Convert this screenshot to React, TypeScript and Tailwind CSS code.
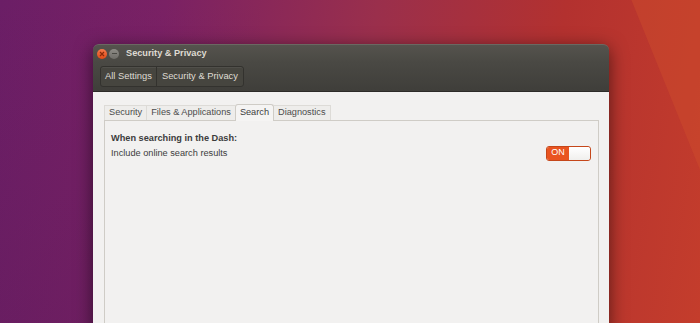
export default function App() {
  return (
    <div className="relative w-[700px] h-[323px] overflow-hidden bg-[linear-gradient(100deg,#6b1e66_0%,#7a2164_22%,#9a2f4c_50%,#b3312f_75%,#c43d2c_100%)] font-['Liberation_Sans',sans-serif]">
      {/* soft lighter facet top-right */}
      <div className="absolute right-[-70px] top-[-40px] w-[110px] h-[200px] rotate-[-22deg] bg-[#cf4e2c]/45" />
      <div className="absolute left-0 top-0 w-[260px] h-[323px] bg-[linear-gradient(180deg,#6e1e6c00_0%,#5a1a5a55_100%)]" />

      <div className="relative ml-[93px] mt-[44px] w-[516px] rounded-t-[6px] shadow-[0_4px_18px_rgba(0,0,0,0.55)]">
        {/* title bar */}
        <div className="flex items-center h-[18px] pl-[3px] rounded-t-[6px] bg-[linear-gradient(180deg,#55534d,#4a4944)] border-t border-[#6a6862]">
          <div className="flex items-center justify-center w-[10px] h-[10px] rounded-full bg-[linear-gradient(180deg,#f37a4d,#df4a16)] ml-[1px]">
            <svg width="6" height="6" viewBox="0 0 6 6">
              <path d="M1 1L5 5M5 1L1 5" stroke="#8a2a0a" strokeWidth="1.2" />
            </svg>
          </div>
          <div className="flex items-center justify-center w-[10px] h-[10px] rounded-full bg-[linear-gradient(180deg,#8d8b85,#6f6d68)] ml-[2px]">
            <div className="w-[5px] h-[1px] bg-[#4a4944]" />
          </div>
          <span className="ml-[7px] text-[9.2px] font-bold text-[#dfdbd2] leading-none">Security &amp; Privacy</span>
        </div>

        {/* toolbar */}
        <div className="flex items-center h-[30px] px-[7px] bg-[linear-gradient(180deg,#4a4944,#3f3e3a)] border-b border-[#2c2b28]">
          <div className="flex h-[21px] rounded-[3px] border border-[#33322e] bg-[#46453f] shadow-[inset_0_1px_0_rgba(255,255,255,0.06)] text-[9.4px] text-[#dfdbd2]">
            <div className="flex items-center px-[4px] border-r border-[#33322e]">All Settings</div>
            <div className="flex items-center px-[5px]">Security &amp; Privacy</div>
          </div>
        </div>

        {/* content */}
        <div className="h-[240px] bg-[#f2f1f0] pt-[11px] pl-[11px] pr-[10px]">
          <div className="flex items-end h-[17px] text-[9.2px] text-[#4c4c4c]">
            <div className="flex items-center h-[15px] px-[4px] border-t border-l border-[#dddbd7] bg-[#eeedeb]">Security</div>
            <div className="flex items-center h-[15px] px-[4px] border-t border-l border-[#dddbd7] bg-[#eeedeb]">Files &amp; Applications</div>
            <div className="flex items-center h-[17px] px-[4px] border-t border-x border-[#cfccc6] rounded-t-[3px] bg-[#f5f4f3] text-[#3c3c3c] relative top-[1px]">Search</div>
            <div className="flex items-center h-[15px] px-[4px] border-t border-r border-[#dddbd7] bg-[#eeedeb]">Diagnostics</div>
          </div>
          <div className="h-[240px] border border-[#cfccc6] bg-[#f2f1f0] px-[6px] pt-[10px]">
            <div className="text-[9.2px] font-bold text-[#3c3c3c] leading-[14px]">When searching in the Dash:</div>
            <div className="flex items-center justify-between">
              <span className="text-[9.2px] text-[#3c3c3c] leading-[16px]">Include online search results</span>
              <div className="flex w-[45px] h-[15px] rounded-[3px] border border-[#c5471a] overflow-hidden mr-[1px]">
                <div className="flex items-center justify-center w-[22px] bg-[#e95420] text-[9px] text-white">ON</div>
                <div className="flex-1 bg-[linear-gradient(180deg,#ffffff,#f0efed)] rounded-[2px]" />
              </div>
            </div>
          </div>
        </div>
      </div>
    </div>
  );
}
